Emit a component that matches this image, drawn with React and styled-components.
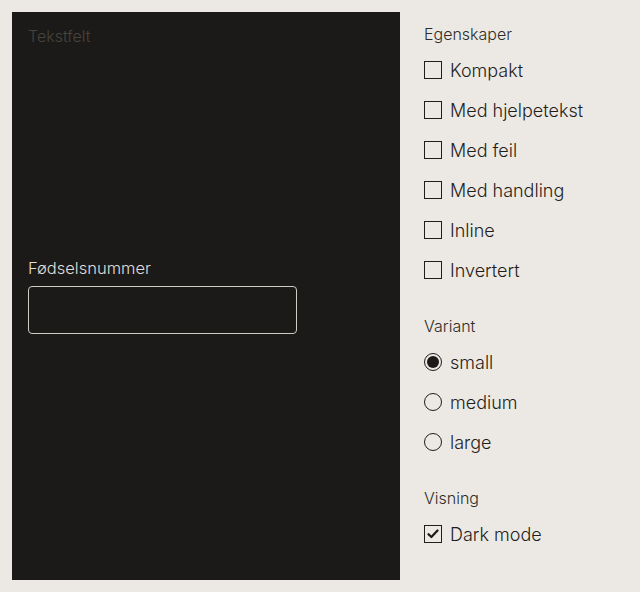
import React from "react";
import styled, { createGlobalStyle } from "styled-components";

const Global = createGlobalStyle`
  html, body { margin: 0; padding: 0; background: #ECE9E5; }
  body { font-family: Inter, "Noto Sans", sans-serif; color: #1F1E1B; }
  * { box-sizing: border-box; }
`;

const Page = styled.div`
  display: flex;
  gap: 24px;
  padding: 12px;
  height: 592px;
`;

const Preview = styled.section`
  width: 388px;
  height: 568px;
  background: #1B1A18;
  padding: 14px 16px;
  display: flex;
  flex-direction: column;
`;

const PreviewTitle = styled.div`
  font-size: 16px;
  line-height: 20px;
  font-weight: 300;
  color: #46443F;
`;

const Center = styled.div`
  flex: 1;
  display: flex;
  flex-direction: column;
  justify-content: center;
  padding-bottom: 20px;
`;

const Label = styled.label`
  font-size: 16.5px;
  line-height: 20px;
  font-weight: 300;
  color: #E2DFDA;
  margin-bottom: 8px;
`;

const Input = styled.input`
  width: 269px;
  height: 48px;
  background: transparent;
  border: 1px solid #CFCBC5;
  border-radius: 4px;
  color: #fff;
  font: inherit;
`;

const Sidebar = styled.aside`
  display: flex;
  flex-direction: column;
  padding-top: 10px;
`;

const Group = styled.fieldset`
  border: 0;
  margin: 0 0 24px;
  padding: 0;
  min-width: 0;
  display: flex;
  flex-direction: column;
`;

const Legend = styled.div`
  font-size: 16px;
  line-height: 24px;
  font-weight: 300;
  color: #2E2D29;
  margin-bottom: 4px;
`;

const Row = styled.label`
  display: flex;
  align-items: center;
  height: 40px;
  gap: 8px;
  font-size: 18px;
  font-weight: 300;
  color: #1F1E1B;
`;

const Box = styled.span`
  width: 18px;
  height: 18px;
  border: 1.5px solid #1F1E1B;
  display: flex;
  align-items: center;
  justify-content: center;
`;

const Radio = styled.span`
  width: 18px;
  height: 18px;
  border-radius: 50%;
  border: 1.5px solid #1F1E1B;
  display: flex;
  align-items: center;
  justify-content: center;
  &::after {
    content: "";
    width: 12px;
    height: 12px;
    border-radius: 50%;
    background: ${(p) => (p.$on ? "#1B1A18" : "transparent")};
  }
`;

const Check = ({ on }) => (
  <Box>
    {on && (
      <svg width="12" height="10" viewBox="0 0 12 10">
        <path d="M1.5 5.2 L4.4 8 L10.5 1.5" fill="none" stroke="#1B1A18" strokeWidth="2.2" strokeLinecap="round" strokeLinejoin="round" />
      </svg>
    )}
  </Box>
);

const props = ["Kompakt", "Med hjelpetekst", "Med feil", "Med handling", "Inline", "Invertert"];
const variants = ["small", "medium", "large"];

export default function App() {
  return (
    <>
      <Global />
      <Page>
        <Preview>
          <PreviewTitle>Tekstfelt</PreviewTitle>
          <Center>
            <Label htmlFor="fnr">Fødselsnummer</Label>
            <Input id="fnr" />
          </Center>
        </Preview>
        <Sidebar>
          <Group>
            <Legend>Egenskaper</Legend>
            {props.map((p) => (
              <Row key={p}>
                <Check on={false} />
                {p}
              </Row>
            ))}
          </Group>
          <Group>
            <Legend>Variant</Legend>
            {variants.map((v, i) => (
              <Row key={v}>
                <Radio $on={i === 0} />
                {v}
              </Row>
            ))}
          </Group>
          <Group>
            <Legend>Visning</Legend>
            <Row>
              <Check on />
              Dark mode
            </Row>
          </Group>
        </Sidebar>
      </Page>
    </>
  );
}
